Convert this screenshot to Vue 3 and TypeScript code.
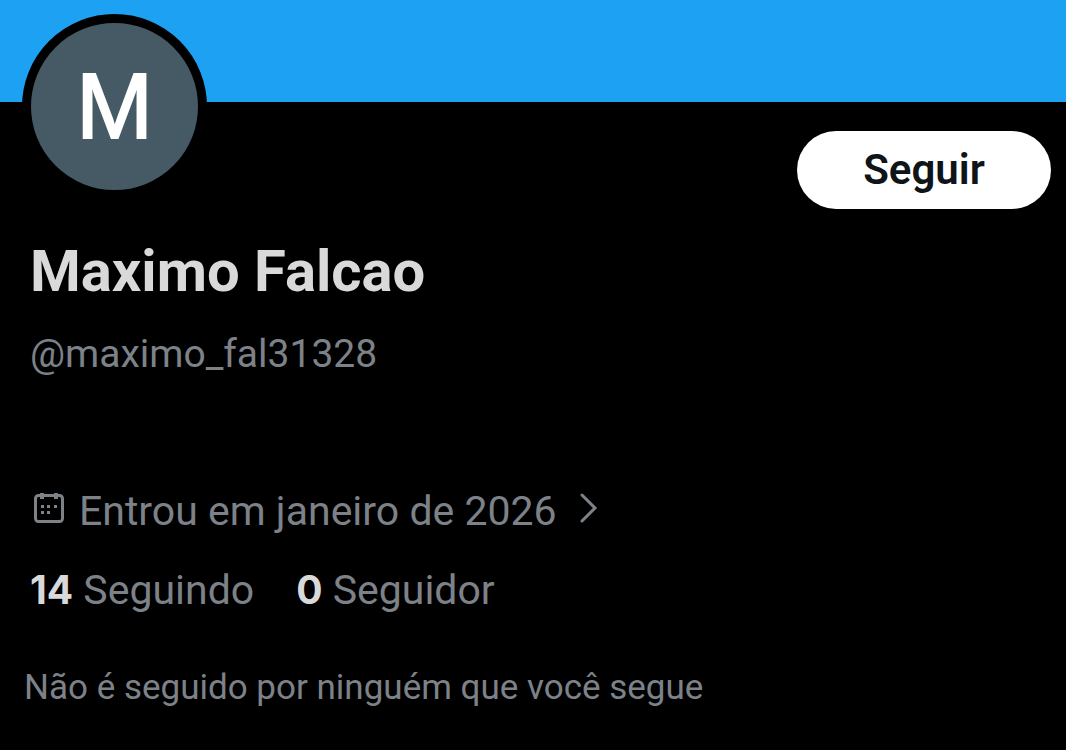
<script setup lang="ts">
const profile = {
  initial: 'M',
  name: 'Maximo Falcao',
  handle: '@maximo_fal31328',
  joined: 'Entrou em janeiro de 2026',
  following: 14,
  followers: 0,
}
</script>

<template>
  <main class="profile">
    <div class="banner"></div>
    <header class="top">
      <div class="avatar">{{ profile.initial }}</div>
      <button class="follow" type="button">Seguir</button>
    </header>
    <section class="info">
      <h1 class="name">{{ profile.name }}</h1>
      <p class="handle">{{ profile.handle }}</p>
      <a class="joined" href="#">
        <svg class="calendar" viewBox="0 0 32 34" aria-hidden="true">
          <rect x="2.5" y="4.5" width="27" height="26" rx="3" fill="none" stroke="currentColor" stroke-width="3" />
          <path d="M9 2v6M23 2v6" stroke="currentColor" stroke-width="4" />
          <path d="M8 14h3v3H8zM14 14h3v3h-3zM21 14h3v3h-3zM8 20h3v3H8zM14 20h3v3h-3z" fill="currentColor" />
        </svg>
        <span>{{ profile.joined }}</span>
        <svg class="chevron" viewBox="0 0 20 32" aria-hidden="true">
          <path d="M3 3l13 13L3 29" fill="none" stroke="currentColor" stroke-width="3" stroke-linecap="round" />
        </svg>
      </a>
      <nav class="stats">
        <a href="#"><strong>{{ profile.following }}</strong> Seguindo</a>
        <a href="#"><strong>{{ profile.followers }}</strong> Seguidor</a>
      </nav>
    </section>
    <p class="mutual">Não é seguido por ninguém que você segue</p>
  </main>
</template>

<style>
body {
  background: #000;
}
</style>

<style scoped>
.profile {
  min-height: 100vh;
  box-sizing: border-box;
  background: #000;
  color: #7c8288;
  font-family: Roboto, "Liberation Sans", sans-serif;
}
.banner {
  height: 102px;
  background: #1da1f2;
}
.top {
  display: flex;
  justify-content: space-between;
  align-items: flex-end;
  margin-top: -88px;
  padding: 0 15px 0 22px;
}
.avatar {
  box-sizing: border-box;
  width: 185px;
  height: 185px;
  border: 9px solid #000;
  border-radius: 50%;
  background: #455a64;
  color: #fff;
  font: 92px/167px "Liberation Sans", sans-serif;
  -webkit-text-stroke: 2px #fff;
  text-align: center;
}
.follow {
  width: 254px;
  height: 78px;
  margin-bottom: -10px;
  padding: 0;
  border: 0;
  border-radius: 39px;
  background: #fff;
  color: #0f1419;
  font: 600 42px/78px Roboto, sans-serif;
}
.info {
  padding: 0 30px;
}
.name {
  margin: 36px 0 0;
  color: #d9d9d9;
  font-size: 58px;
  font-weight: 700;
  line-height: 72px;
}
.handle {
  margin: 23px 0 0;
  font-size: 39px;
  line-height: 48px;
}
.joined {
  display: flex;
  align-items: flex-start;
  width: fit-content;
  margin-top: 107px;
  color: inherit;
  font-size: 41px;
  line-height: 52px;
  text-decoration: none;
}
.stats {
  display: flex;
  gap: 42px;
  margin-top: 27px;
  font-size: 41px;
  line-height: 52px;
}
.stats a {
  color: inherit;
  text-decoration: none;
}
.stats strong {
  color: #d9d9d9;
  font-family: Inter, sans-serif;
  font-size: 39px;
}
.calendar {
  width: 32px;
  height: 34px;
  margin: 6px 14px 0 3px;
}
.chevron {
  width: 20px;
  height: 32px;
  margin: 7px 0 0 22px;
}
.mutual {
  margin: 48px 24px 0;
  font-size: 35px;
  line-height: 48px;
}
</style>
